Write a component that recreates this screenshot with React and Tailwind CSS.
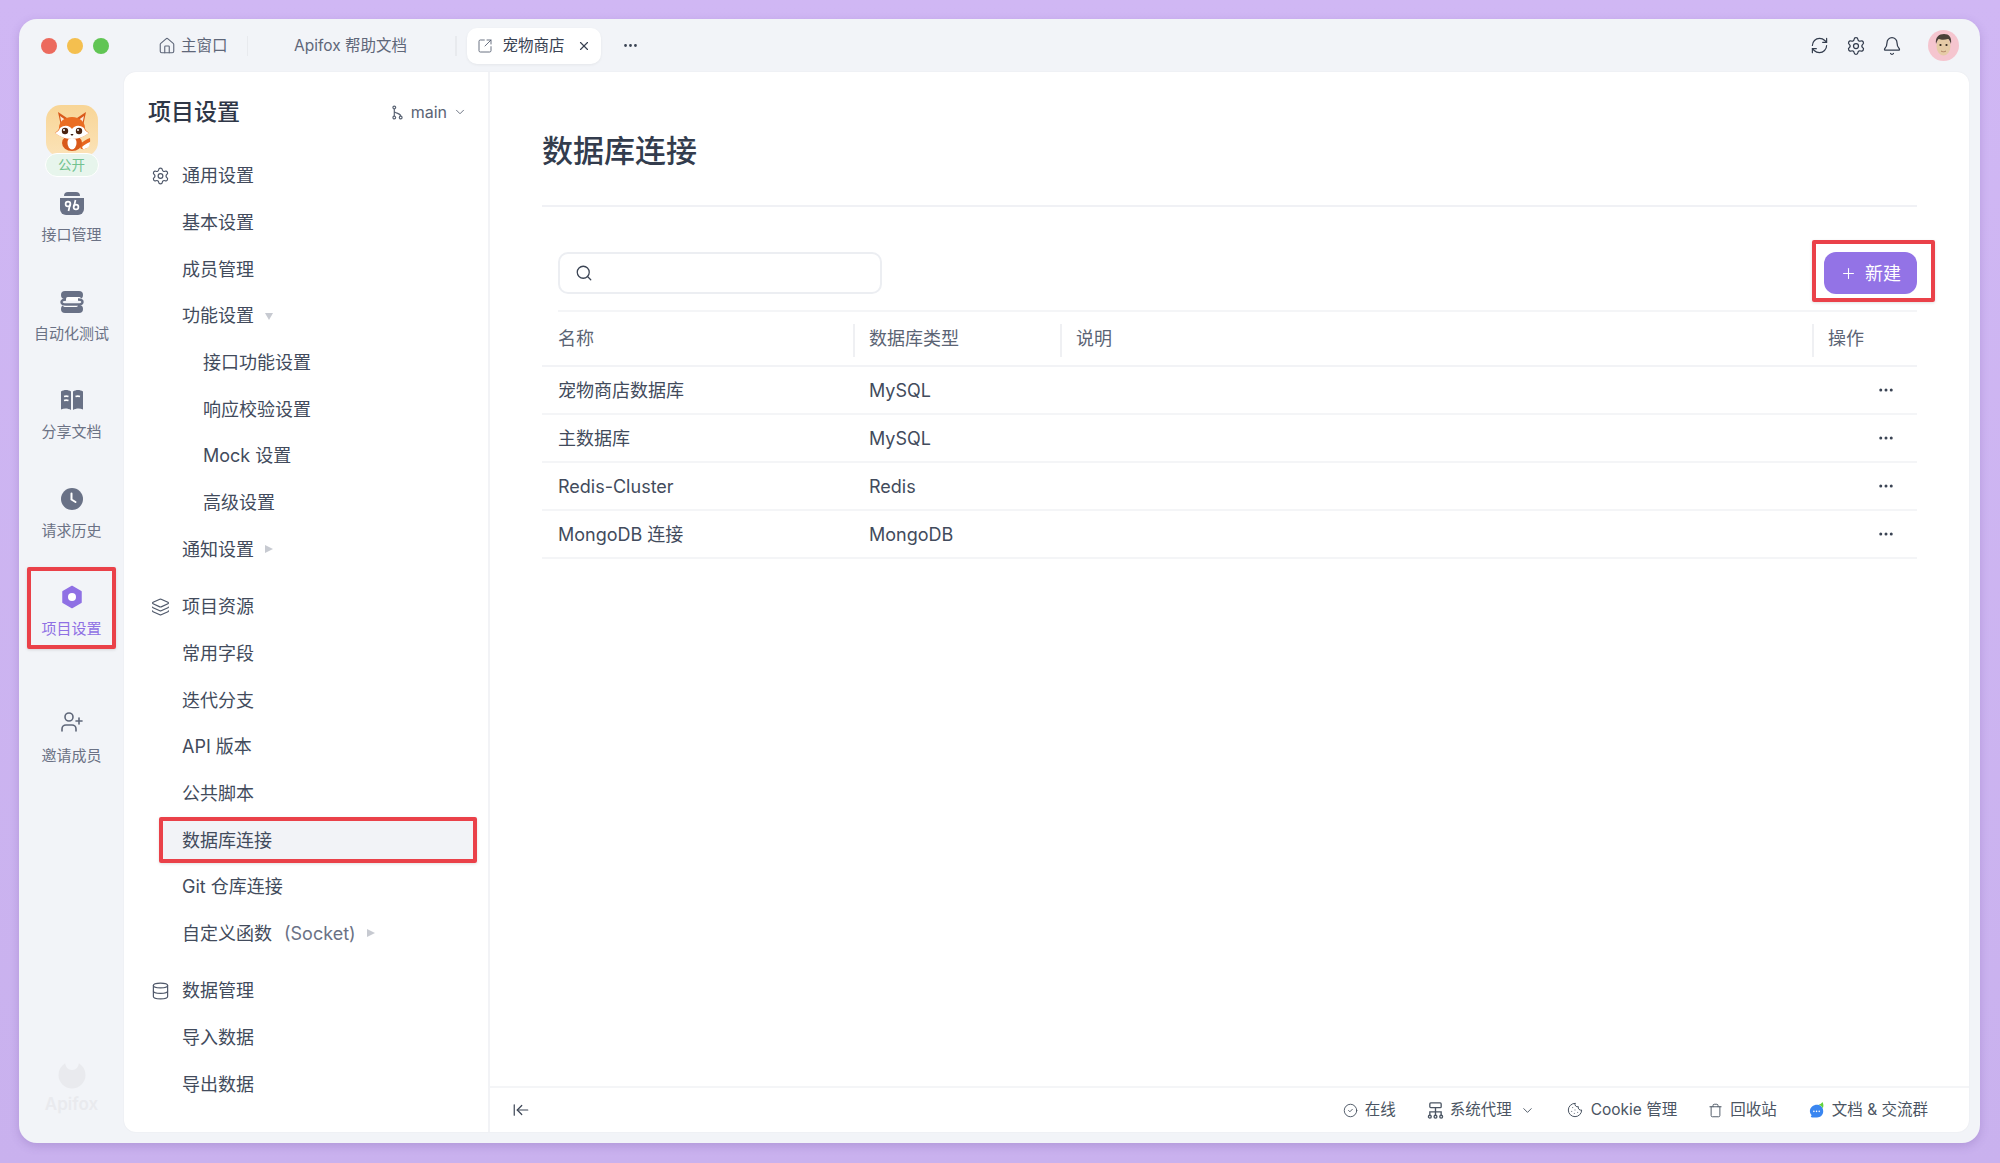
import React from 'react';
import { House, SquareArrowOutUpRight, X, Ellipsis, RefreshCw, Settings, Bell, ChevronDown, Search, Plus, Layers, Database, UserPlus, CircleCheck, Cookie, Trash, ArrowLeftToLine } from 'lucide-react';

function FoxLogo() {
  return (
    <svg viewBox="0 0 52 52" className="w-[52px] h-[52px] block">
      <defs>
        <linearGradient id="foxbg" x1="0" y1="0" x2="0" y2="1">
          <stop offset="0" stopColor="#f8d596" />
          <stop offset="1" stopColor="#fbe3b8" />
        </linearGradient>
      </defs>
      <rect width="52" height="52" rx="15" fill="url(#foxbg)" />
      <path d="M35 44c6 1 10-3 9-11-3 1-8 4-11 7z" fill="#e8661f" />
      <path d="M37 44c4 0 7-2 7-7-3 1-6 3-8 5z" fill="#fff" />
      <ellipse cx="26" cy="38" rx="10" ry="8" fill="#d9591a" />
      <ellipse cx="26" cy="38" rx="4.5" ry="6.5" fill="#fff" />
      <path d="M12 7l3 14 9-6z" fill="#d9591a" />
      <path d="M40 7l-3 14-9-6z" fill="#d9591a" />
      <path d="M14 11l2 9 5-4z" fill="#fbe7d5" />
      <path d="M38 11l-2 9-5-4z" fill="#fbe7d5" />
      <path d="M26 12c8 0 13 5 13 11 0 2 3 4 4 5-4 3-10 6-17 6s-13-3-17-6c1-1 4-3 4-5 0-6 5-11 13-11z" fill="#ea6d22" />
      <path d="M26 24c-2-3-7-5-12-1-1 3-3 4-5 5 4 3 10 6 17 6s13-3 17-6c-2-1-4-2-5-5-5-4-10-2-12 1z" fill="#fff" />
      <circle cx="19" cy="26" r="3.2" fill="#4a2412" />
      <circle cx="33" cy="26" r="3.2" fill="#4a2412" />
      <circle cx="18" cy="25" r="1" fill="#fff" />
      <circle cx="32" cy="25" r="1" fill="#fff" />
      <path d="M24.4 29h3.2L26 31z" fill="#3a1c10" />
    </svg>
  );
}

function AvatarFace() {
  return (
    <svg viewBox="0 0 31 31" className="w-[31px] h-[31px] block">
      <circle cx="15.5" cy="15.5" r="15.5" fill="#f5c5cf" />
      <ellipse cx="15.5" cy="16" rx="7" ry="9.5" fill="#e6cba6" />
      <path d="M8 14c-1-7 3-10 8-10s8 3 7 10c-1-3-2-5-3-5-3 1-7 1-9 0-1 0-2 2-3 5z" fill="#4a4038" />
      <circle cx="12.5" cy="15" r="1.1" fill="#33291f" />
      <circle cx="18.5" cy="15" r="1.1" fill="#33291f" />
      <path d="M13 21c1.500 1 3.500 1 5 0" stroke="#a87a5e" strokeWidth="0.9" fill="none" />
    </svg>
  );
}

const G = '#697186';

function ApiIcon() {
  return (
    <svg viewBox="0 0 24 24" className="w-[24px] h-[24px]">
      <path d="M4 5a4 4 0 0 1 4-4h8a4 4 0 0 1 4 4z" fill={G} transform="translate(0 0)" />
      <path d="M0 7h24v11a6 6 0 0 1-6 6H6a6 6 0 0 1-6-6z" fill={G} />
      <circle cx="8" cy="13" r="2.400" fill="none" stroke="#fff" strokeWidth="1.700" />
      <path d="M10 13.500L8.500 20" stroke="#fff" strokeWidth="1.700" />
      <circle cx="16" cy="16" r="2.400" fill="none" stroke="#fff" strokeWidth="1.700" />
      <path d="M14 15.500L15.500 9" stroke="#fff" strokeWidth="1.700" />
    </svg>
  );
}
function AutoIcon() {
  return (
    <svg viewBox="0 0 24 24" className="w-[24px] h-[24px]" fill="none">
      <rect x="1" y="1" width="22" height="8" rx="4" fill={G} />
      <rect x="1" y="15" width="22" height="8" rx="4" fill={G} />
      <rect x="6" y="7" width="15" height="3.500" rx="1.700" fill="#fff" />
      <rect x="3" y="13.500" width="15" height="3.500" rx="1.700" fill="#fff" />
      <path d="M18 9.500c6 0 6 5 0 5H6" stroke={G} strokeWidth="2.400" />
      <path d="M6 9.500c-6 0-6 5 0 5" stroke={G} strokeWidth="2.400" />
    </svg>
  );
}
function BookIcon() {
  return (
    <svg viewBox="0 0 24 24" className="w-[24px] h-[24px]">
      <path d="M1 3.500C4 1.500 8 1.500 11 3.500V22C8 20 4 20 1 21.500z" fill={G} />
      <path d="M23 3.500C20 1.500 16 1.500 13 3.500V22C16 20 20 20 23 21.500z" fill={G} />
      <path d="M4 8.500c1.500-.5 3-.5 4.500 0M4 12.500c1.500-.5 3-.5 4.500 0M15.500 8.500c1.500-.5 3-.5 4.500 0" stroke="#fff" strokeWidth="1.600" fill="none" />
    </svg>
  );
}
function ClockIcon() {
  return (
    <svg viewBox="0 0 24 24" className="w-[24px] h-[24px]">
      <circle cx="12" cy="12" r="11" fill={G} />
      <path d="M11.500 6.500V12.500L15.500 15" stroke="#fff" strokeWidth="2" fill="none" strokeLinecap="round" />
    </svg>
  );
}
function HexIcon() {
  return (
    <svg viewBox="0 0 24 24" className="w-[24px] h-[24px]">
      <path d="M12 1.500l9 5.200v10.600l-9 5.200-9-5.200V6.700z" fill="#8f70e4" stroke="#8f70e4" strokeWidth="1.500" strokeLinejoin="round" />
      <circle cx="12" cy="12" r="4" fill="#fff" />
    </svg>
  );
}
function ProxyIcon() {
  return (
    <svg viewBox="0 0 18 18" className="w-[17px] h-[17px]" fill="none" stroke="#4b5563" strokeWidth="1.400">
      <rect x="3" y="1" width="12" height="5" rx="1" />
      <path d="M9 6v8M3 14v-3.500h12V14" />
      <circle cx="3" cy="15.500" r="1.500" />
      <circle cx="9" cy="15.500" r="1.500" />
      <circle cx="15" cy="15.500" r="1.500" />
    </svg>
  );
}
function ChatIcon() {
  return (
    <svg viewBox="0 0 18 18" className="w-[16px] h-[16px]">
      <path d="M9 3c3 0 7 2 7 7.500 0 4-3 7-7 7-1.500 0-7 0-7-1 0-.5 1-1 .8-2C1.500 13 1 11.500 1 10c0-4 4-7 8-7z" fill="#3a86f0" />
      <path d="M11 3c2-.5 3-1.500 4-3 2 3 1 6 .5 7-1-2-2.500-3.500-4.500-4z" fill="#63d23c" />
      <circle cx="5.500" cy="10.500" r=".9" fill="#fff" />
      <circle cx="8.500" cy="10.500" r=".9" fill="#fff" />
      <circle cx="11.500" cy="10.500" r=".9" fill="#fff" />
    </svg>
  );
}
function BranchIcon() {
  return (
    <svg viewBox="0 0 12 16" className="w-[11px] h-[15px]" fill="none" stroke="#5b6474" strokeWidth="1.300">
      <circle cx="2.500" cy="2.500" r="1.500" />
      <circle cx="2.500" cy="13.500" r="1.500" />
      <circle cx="9.500" cy="13.500" r="1.500" />
      <path d="M2.500 4v8M2.500 6.500c0 2.500 7 2 7 5.500" />
    </svg>
  );
}
function ApifoxMark() {
  return (
    <svg viewBox="0 0 28 28" className="w-[28px] h-[28px]">
      <circle cx="14" cy="14" r="13.500" fill="#e9eaee" />
      <path d="M7 0c0 6 3 9 7 9s7-3 7-9z" fill="#f2f4f8" />
    </svg>
  );
}
function Tri({ down }) {
  return (
    <svg viewBox="0 0 8 8" className="w-[8px] h-[8px]">
      <path d={down ? 'M0 1h8L4 8z' : 'M0 0l8 4-8 4z'} fill="#c7cad1" />
    </svg>
  );
}

const RED = 'border-[4px] border-[#ea4149] rounded-[2px] shadow-[0_1px_3px_rgba(0,0,0,0.12)]';

function RailItem({ icon, label, active, extra }) {
  return (
    <div className={`relative flex flex-col items-center h-[98.500px] pt-[11px] ${extra || ''}`}>
      {active && <div className={`absolute left-[8px] w-[89px] top-[-7px] h-[82px] ${RED}`} />}
      <div className="w-[24px] h-[24px] flex items-center justify-center">{icon}</div>
      <div className={`mt-[10px] text-[15px] leading-[20px] ${active ? 'text-[#8f70e4]' : 'text-[#6b7285]'}`}>{label}</div>
    </div>
  );
}

function Rail() {
  return (
    <div className="w-[105px] shrink-0 flex flex-col">
      <div className="pt-[33px] flex flex-col items-center h-[108px]">
        <FoxLogo />
        <div className="relative -mt-[4px] w-[54px] h-[24px] rounded-full bg-[#e7f5ec] border border-white text-[#72c28f] text-[13.500px] leading-[22px] text-center">公开</div>
      </div>
      <RailItem icon={<ApiIcon />} label="接口管理" />
      <RailItem icon={<AutoIcon />} label="自动化测试" />
      <RailItem icon={<BookIcon />} label="分享文档" />
      <RailItem icon={<ClockIcon />} label="请求历史" />
      <RailItem icon={<HexIcon />} label="项目设置" active />
      <div className="flex flex-col items-center mt-[37px]">
        <UserPlus size={24} strokeWidth={1.600} className="text-[#5f6779]" />
        <div className="mt-[12px] text-[15px] leading-[20px] text-[#6b7285]">邀请成员</div>
      </div>
      <div className="mt-auto pb-[28px] flex flex-col items-center">
        <ApifoxMark />
        <div className="mt-[4px] text-[17px] leading-[22px] font-semibold text-[#e9eaee]">Apifox</div>
      </div>
    </div>
  );
}

function MenuRow({ children, active, indent }) {
  return (
    <div className={`relative h-[46.670px] ml-[39px] mr-[15px] flex items-center gap-[11px] text-[18px] text-[#424b5c] ${indent ? 'pl-[40px]' : 'pl-[19px]'} ${active ? 'bg-[#f2f3f7]' : ''}`}>
      {active && <div className={`absolute -left-[4px] -right-[4px] top-0 bottom-0 ${RED}`} />}
      {children}
    </div>
  );
}
function GroupRow({ icon, label }) {
  return (
    <div className="h-[46.670px] ml-[27px] flex items-center gap-[12px] text-[18px] text-[#424b5c]">
      <div className="w-[19px] flex justify-center text-[#4f586a]">{icon}</div>
      {label}
    </div>
  );
}

function Menu() {
  return (
    <div className="w-[366px] shrink-0 border-r-2 border-[#f2f3f6] flex flex-col">
      <div className="h-[80.500px] flex items-center justify-between pl-[24px] pr-[21px] shrink-0">
        <div className="text-[23px] font-medium text-[#2f3747]">项目设置</div>
        <div className="flex items-center text-[16px] text-[#5b6474]">
          <BranchIcon />
          <span className="ml-[8px]">main</span>
          <ChevronDown size={14} strokeWidth={1.500} className="ml-[6px]" />
        </div>
      </div>
      <GroupRow icon={<Settings size={20} strokeWidth={1.500} />} label="通用设置" />
      <MenuRow>基本设置</MenuRow>
      <MenuRow>成员管理</MenuRow>
      <MenuRow>功能设置<Tri down /></MenuRow>
      <MenuRow indent>接口功能设置</MenuRow>
      <MenuRow indent>响应校验设置</MenuRow>
      <MenuRow indent>Mock 设置</MenuRow>
      <MenuRow indent>高级设置</MenuRow>
      <MenuRow>通知设置<Tri /></MenuRow>
      <div className="h-[11px] shrink-0" />
      <GroupRow icon={<Layers size={20} strokeWidth={1.500} />} label="项目资源" />
      <MenuRow>常用字段</MenuRow>
      <MenuRow>迭代分支</MenuRow>
      <MenuRow>API 版本</MenuRow>
      <MenuRow>公共脚本</MenuRow>
      <MenuRow active>数据库连接</MenuRow>
      <MenuRow>Git 仓库连接</MenuRow>
      <MenuRow>
        自定义函数
        <span className="ml-[1px] text-[#6b7285]">(Socket)</span>
        <Tri />
      </MenuRow>
      <div className="h-[11px] shrink-0" />
      <GroupRow icon={<Database size={20} strokeWidth={1.500} />} label="数据管理" />
      <MenuRow>导入数据</MenuRow>
      <MenuRow>导出数据</MenuRow>
    </div>
  );
}

const rows = [
  ['宠物商店数据库', 'MySQL'],
  ['主数据库', 'MySQL'],
  ['Redis-Cluster', 'Redis'],
  ['MongoDB 连接', 'MongoDB'],
];

function HeadCell({ w, children, line }) {
  return (
    <div className={`relative flex items-center h-full pl-[16px] ${w}`}>
      {line && <div className="absolute left-0 top-[12px] bottom-[8px] w-[1.500px] bg-[#eff0f3]" />}
      {children}
    </div>
  );
}

function Content() {
  return (
    <div className="flex-1 min-w-0 flex flex-col">
      <div className="flex-1 px-[52px] pt-[55px]">
        <div className="h-[80px] border-b-2 border-[#f0f1f5]">
          <div className="text-[31px] leading-[48px] font-medium text-[#333c4d]">数据库连接</div>
        </div>
        <div className="mt-[39px] ml-[16px] h-[54px] pb-[10px] flex items-center justify-between border-b-2 border-[#f4f5f7] box-content h-[42px]">
          <div className="w-[324px] h-[42px] rounded-[10px] border-2 border-[#eceef2] flex items-center pl-[15px] text-[#3b4454]">
            <Search size={18} strokeWidth={1.700} />
          </div>
          <div className="relative w-[93px] h-[42px] rounded-[12px] bg-[#9373e6] flex items-center justify-center gap-[8px] text-[18px] text-white">
            <div className={`absolute left-[-12px] right-[-18px] top-[-12px] bottom-[-8px] ${RED}`} />
            <Plus size={17} strokeWidth={1.500} />
            新建
          </div>
        </div>
        <div className="flex items-center h-[55px] text-[18px] text-[#5b6474] border-b-2 border-[#f2f3f6]">
          <HeadCell w="w-[311px]">名称</HeadCell>
          <HeadCell w="w-[207px]" line>数据库类型</HeadCell>
          <HeadCell w="flex-1" line>说明</HeadCell>
          <HeadCell w="w-[105px]" line>操作</HeadCell>
        </div>
        {rows.map((r) => (
          <div key={r[0]} className="flex items-center h-[48px] text-[18px] text-[#424b5c] border-b-2 border-[#f4f5f7]">
            <div className="w-[311px] pl-[16px]">{r[0]}</div>
            <div className="flex-1 pl-[16px]">{r[1]}</div>
            <div className="w-[105px] flex justify-end pr-[22px] text-[#3b4454]"><Ellipsis size={18} strokeWidth={2} /></div>
          </div>
        ))}
      </div>
      <div className="h-[46px] shrink-0 border-t-2 border-[#f4f5f7] flex items-center pl-[22px] pr-[41px] text-[15.500px] text-[#4b5563]">
        <ArrowLeftToLine size={18} strokeWidth={1.600} className="text-[#3b4454]" />
        <div className="ml-auto flex items-center">
          <CircleCheck size={15} strokeWidth={1.500} />
          <span className="ml-[7px]">在线</span>
          <div className="ml-[31px]"><ProxyIcon /></div>
          <span className="ml-[6px]">系统代理</span>
          <ChevronDown size={15} strokeWidth={1.500} className="ml-[8px]" />
          <Cookie size={16} strokeWidth={1.500} className="ml-[32px]" />
          <span className="ml-[8px]">Cookie 管理</span>
          <Trash size={15} strokeWidth={1.500} className="ml-[31px]" />
          <span className="ml-[7px]">回收站</span>
          <div className="ml-[32px]"><ChatIcon /></div>
          <span className="ml-[7px]">文档 &amp; 交流群</span>
        </div>
      </div>
    </div>
  );
}

function TabBar() {
  return (
    <div className="h-[53px] flex items-center shrink-0 pl-[22px] pr-[21px]">
      <div className="flex items-center gap-[10px]">
        <div className="w-[16px] h-[16px] rounded-full bg-[#ec6a5e]" />
        <div className="w-[16px] h-[16px] rounded-full bg-[#f4bf4f]" />
        <div className="w-[16px] h-[16px] rounded-full bg-[#61c554]" />
      </div>
      <div className="ml-[49px] flex items-center text-[15.500px] text-[#5f6779]">
        <House size={18} strokeWidth={1.500} />
        <span className="ml-[5px]">主窗口</span>
        <div className="ml-[19px] w-[1.500px] h-[20px] bg-[#e8eaee]" />
        <span className="ml-[46px]">Apifox 帮助文档</span>
        <div className="ml-[48px] w-[1.500px] h-[20px] bg-[#e8eaee]" />
        <div className="ml-[10px] w-[134px] h-[36px] bg-white rounded-[10px] shadow-[0_1px_3px_rgba(0,0,0,0.06)] flex items-center pl-[10px] text-[#394252]">
          <SquareArrowOutUpRight size={16} strokeWidth={1.400} className="text-[#5f6779]" />
          <span className="ml-[10px]">宠物商店</span>
          <X size={14} strokeWidth={2} className="ml-[12px]" />
        </div>
        <Ellipsis size={17} strokeWidth={2} className="ml-[21px] text-[#3b4454]" />
      </div>
      <div className="ml-auto flex items-center text-[#333c4d]">
        <RefreshCw size={19} strokeWidth={1.500} />
        <Settings size={20} strokeWidth={1.500} className="ml-[17px]" />
        <Bell size={20} strokeWidth={1.500} className="ml-[16px]" />
        <div className="ml-[26px]"><AvatarFace /></div>
      </div>
    </div>
  );
}

export default function App() {
  return (
    <div className="w-[2000px] h-[1163px] bg-gradient-to-b from-[#d0b7f4] to-[#c9b1ee] pt-[19px] pl-[19px] [font-family:Inter,'Noto_Sans_CJK_SC',sans-serif] overflow-hidden">
      <div className="w-[1961px] h-[1124px] bg-[#f2f4f8] rounded-[18px] shadow-[0_3px_10px_rgba(90,60,140,0.22)] flex flex-col overflow-hidden">
        <TabBar />
        <div className="flex-1 min-h-0 flex">
          <Rail />
          <div className="flex-1 min-w-0 mr-[11px] mb-[11px] bg-white rounded-[12px] flex overflow-hidden shadow-[0_0_2px_rgba(0,0,0,0.06)]">
            <Menu />
            <Content />
          </div>
        </div>
      </div>
    </div>
  );
}
